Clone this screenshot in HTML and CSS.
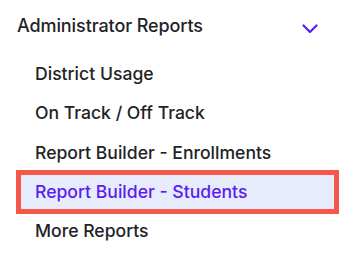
FILE: index.html
```html
<!DOCTYPE html>
<html>
<head>
<meta charset="utf-8">
<link rel="stylesheet" href="styles.css">
</head>
<body>
<div class="panel">
  <div class="header">
    <span class="title">Administrator Reports</span>
    <svg class="chev" width="16" height="10" viewBox="0 0 16 10"><path d="M1.5 1.5 L8 8 L14.5 1.5" fill="none" stroke="#5a1cf2" stroke-width="2.2" stroke-linecap="round" stroke-linejoin="round"/></svg>
  </div>
  <ul class="list">
    <li class="item">District Usage</li>
    <li class="item">On Track / Off Track</li>
    <li class="item">Report Builder - Enrollments</li>
    <li class="item active">Report Builder - Students</li>
    <li class="item">More Reports</li>
  </ul>
</div>
</body>
</html>
```
FILE: styles.css
```css
html, body {
  margin: 0;
  padding: 0;
  background: #ffffff;
}
body {
  font-family: Inter, "Noto Sans", sans-serif;
  color: #222326;
  width: 340px;
  height: 262px;
  overflow: hidden;
}
.header {
  display: flex;
  align-items: center;
  justify-content: space-between;
  height: 50px;
  padding: 0 22px 0 17px;
}
.title {
  font-size: 18px;
  font-weight: 500;
  letter-spacing: -0.1px;
}
.chev {
  display: block;
  margin-top: 7px;
}
.list {
  list-style: none;
  margin: 7px 0 0 0;
  padding: 0 6px 0 21px;
  display: flex;
  flex-direction: column;
  gap: 5.33px;
}
.item {
  height: 34px;
  line-height: 34px;
  padding-left: 14px;
  font-size: 17.6px;
  font-weight: 500;
}
.item.active {
  background: #e7ecfd;
  color: #5a1cf2;
  outline: 5px solid #f5584a;
}
```
